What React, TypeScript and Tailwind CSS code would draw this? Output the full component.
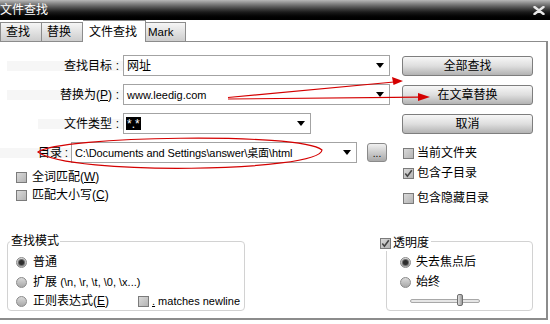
import React from "react";

function Check({ checked }: { checked?: boolean }) {
  return (
    <span className="w-[11px] h-[11px] shrink-0 border border-[#7b7b7b] bg-linear-to-br from-[#d9d9d9] to-[#b4b4b4] flex items-center justify-center">
      {checked && (
        <svg width="9" height="9" viewBox="0 0 9 9">
          <path d="M1.3 4.6 L3.4 7.2 L7.8 1.2" stroke="#454545" strokeWidth="1.6" fill="none" />
        </svg>
      )}
    </span>
  );
}

function Radio({ on }: { on?: boolean }) {
  return (
    <span className="w-[11px] h-[11px] shrink-0 rounded-full border border-[#8a8a8a] bg-linear-to-b from-[#dadada] to-[#a9a9a9] flex items-center justify-center">
      {on && <span className="w-[5px] h-[5px] rounded-full bg-[#2e2e2e] ring-1 ring-[#6a6a6a]" />}
    </span>
  );
}

function Arrow() {
  return (
    <svg width="8" height="5" viewBox="0 0 8 5" className="shrink-0">
      <path d="M0 0 H8 L4 5 Z" fill="#000" />
    </svg>
  );
}

function Btn({ children }: { children: React.ReactNode }) {
  return (
    <div className="ml-[1px] w-[131px] h-[20px] rounded-[3px] border border-[#7e7e7e] bg-linear-to-b from-[#f7f7f7] via-[#dedede] to-[#b3b3b3] flex items-center justify-center leading-[14px]">
      {children}
    </div>
  );
}

export default function App() {
  return (
    <div className="relative w-[550px] h-[324px] overflow-hidden bg-white text-[12px] text-black font-['Liberation_Sans','Noto_Sans_CJK_SC',sans-serif]">
      {/* title bar */}
      <div className="h-[20px] bg-linear-to-b from-[#b8b8b8] via-[#1c1c1c] via-60% to-black flex items-center justify-between text-white">
        <span className="ml-0 text-[12px] leading-[14px]">文件查找</span>
        <svg width="12" height="9" viewBox="0 0 12 9" className="mr-[5px]">
          <path d="M1.5 1 L10.5 8 M10.5 1 L1.5 8" stroke="#e8e8e8" strokeWidth="2.4" strokeLinecap="round" />
        </svg>
      </div>

      {/* tabs */}
      <div className="h-[22px] flex items-end mr-[2px] leading-[14px]">
        <div className="w-[42px] h-[20px] border border-[#8c8c8c] bg-linear-to-b from-[#f6f6f6] to-[#cdcdcd] pl-[5px] flex items-center">查找</div>
        <div className="w-[41px] h-[20px] border border-l-0 border-[#8c8c8c] bg-linear-to-b from-[#f6f6f6] to-[#cdcdcd] pl-[5px] flex items-center">替换</div>
        <div className="w-[63px] h-[22px] border border-b-0 border-l-0 border-[#8c8c8c] bg-white pl-[6px] flex items-center">文件查找</div>
        <div className="w-[40px] h-[20px] border border-l-0 border-[#8c8c8c] bg-linear-to-b from-[#f6f6f6] to-[#cdcdcd] pl-[2px] flex items-center text-[11.5px]">Mark</div>
        <div className="flex-1 border-b border-[#8c8c8c]" />
      </div>

      {/* content */}
      <div className="h-[278px] mr-[2px] border-r-2 border-b-2 border-[#8c8c8c] flex flex-col leading-[14px]">
        <div className="flex">
          {/* left column */}
          <div className="w-[401px] pt-[13px] flex flex-col">
            <div className="h-[21px] flex items-center">
              <div className="ml-[7px] w-[116px] h-[10px] bg-[#f6f6f6] flex items-center justify-end">
                <span>查找目标</span>
                <span className="w-[11px] text-center">:</span>
              </div>
              <div className="w-[267px] h-[21px] border border-[#a3a3a3] bg-white flex items-center justify-between pl-[3px] pr-[5px]">
                <span>网址</span>
                <Arrow />
              </div>
            </div>
            <div className="mt-[8px] h-[21px] flex items-center">
              <div className="ml-[7px] w-[116px] h-[10px] bg-[#f6f6f6] flex items-center justify-end">
                <span>替换为(<span className="underline">P</span>)</span>
                <span className="w-[11px] text-center">:</span>
              </div>
              <div className="w-[267px] h-[21px] border border-[#a3a3a3] bg-white flex items-center justify-between pl-[3px] pr-[5px]">
                <span className="text-[11px]">www.leedig.com</span>
                <Arrow />
              </div>
            </div>
            <div className="mt-[8px] h-[21px] flex items-center">
              <div className="ml-[38px] w-[85px] h-[10px] bg-[#f6f6f6] flex items-center justify-end">
                <span>文件类型</span>
                <span className="w-[11px] text-center">:</span>
              </div>
              <div className="w-[188px] h-[21px] border border-[#a3a3a3] bg-white flex items-center justify-between pl-[2px] pr-[5px]">
                <span className="bg-black text-white text-[12px] px-[1px] h-[13px] leading-[15px] flex items-start">*.*</span>
                <Arrow />
              </div>
            </div>
            <div className="mt-[8px] h-[21px] flex items-center">
              <div className="w-[71px] h-[10px] bg-[#f6f6f6] flex items-center justify-end">
                <span>目录</span>
                <span className="w-[9px] text-center">:</span>
              </div>
              <div className="w-[286px] h-[21px] border border-[#a3a3a3] bg-white flex items-center justify-between pl-[3px] pr-[5px]">
                <span className="text-[11px] tracking-[-0.1px]">C:\Documents and Settings\answer\桌面\html</span>
                <Arrow />
              </div>
              <div className="ml-[10px] w-[20px] h-[19px] rounded-[3px] border border-[#8a8a8a] bg-linear-to-b from-[#f0f0f0] to-[#a9a9a9] flex items-end justify-center text-[10px] leading-[12px] pb-[1px]">
                ...
              </div>
            </div>
            <div className="mt-[5px] h-[18px] pl-[16px] flex items-center gap-[5px]">
              <Check />
              <span>全词匹配(<span className="underline">W</span>)</span>
            </div>
            <div className="h-[18px] pl-[16px] flex items-center gap-[5px]">
              <Check />
              <span>匹配大小写(<span className="underline">C</span>)</span>
            </div>
          </div>

          {/* right column */}
          <div className="w-[132px] pt-[14px] flex flex-col">
            <Btn>全部查找</Btn>
            <div className="mt-[9px]"><Btn>在文章替换</Btn></div>
            <div className="mt-[9px]"><Btn>取消</Btn></div>
            <div className="mt-[9px] h-[20px] pl-[2px] flex items-center gap-[3px]">
              <Check />
              <span>当前文件夹</span>
            </div>
            <div className="h-[20px] pl-[2px] flex items-center gap-[3px]">
              <Check checked />
              <span>包含子目录</span>
            </div>
            <div className="mt-[5px] h-[20px] pl-[2px] flex items-center gap-[3px]">
              <Check />
              <span>包含隐藏目录</span>
            </div>
          </div>
        </div>

        {/* groups */}
        <div className="mt-[33px] flex">
          <div className="relative ml-[7px] w-[238px] h-[70px] border border-[#d2d2d2] rounded-[4px] pt-[10px] flex flex-col">
            <span className="absolute left-[2px] -top-[9px] bg-white px-[1px] leading-[16px]">查找模式</span>
            <div className="h-[20px] pl-[8px] flex items-center gap-[6px]">
              <Radio on />
              <span>普通</span>
            </div>
            <div className="h-[20px] pl-[8px] flex items-center gap-[6px]">
              <Radio />
              <span>扩展 <span className="text-[11px]">(\n, \r, \t, \0, \x...)</span></span>
            </div>
            <div className="h-[18px] pl-[8px] flex items-center gap-[6px]">
              <Radio />
              <span className="w-[99px]">正则表达式(<span className="underline">E</span>)</span>
              <span className="flex items-center gap-[3px]">
                <Check />
                <span className="text-[11px]"><span className="underline">.</span> matches newline</span>
              </span>
            </div>
          </div>

          <div className="relative ml-[141px] w-[147px] h-[70px] border border-[#d2d2d2] rounded-[4px] pt-[10px] flex flex-col">
            <span className="absolute -left-[7px] -top-[7px] h-[16px] bg-white pr-[2px] flex items-center gap-[2px]">
              <Check checked />
              <span>透明度</span>
            </span>
            <div className="h-[20px] pl-[13px] flex items-center gap-[5px]">
              <Radio on />
              <span>失去焦点后</span>
            </div>
            <div className="h-[20px] pl-[13px] flex items-center gap-[5px]">
              <Radio />
              <span>始终</span>
            </div>
            <div className="h-[18px] pl-[23px] flex items-center">
              <div className="relative w-[70px] h-[4px] rounded-full border border-[#a8a8a8] bg-[#e6e6e6]">
                <span className="absolute left-[46px] -top-[6px] w-[6px] h-[12px] rounded-[2px] border border-[#6e6e6e] bg-linear-to-r from-[#e0e0e0] to-[#9c9c9c]" />
              </div>
            </div>
          </div>
        </div>
      </div>

      {/* red annotations */}
      <svg className="absolute left-0 top-0 pointer-events-none" width="550" height="324" viewBox="0 0 550 324">
        <g stroke="#d40000" strokeWidth="1.2" fill="none">
          <path d="M228 97.5 L394 82" />
          <path d="M228 99 L419 97.2" />
          <path d="M38 152 C 60 136, 300 132, 322 150 C 320 172, 70 176, 38 152 Z" />
        </g>
        <path d="M403 81 L392 77 L393.5 85 Z" fill="#d40000" />
        <path d="M430 97 L418 93 L418 101 Z" fill="#d40000" />
      </svg>
    </div>
  );
}
